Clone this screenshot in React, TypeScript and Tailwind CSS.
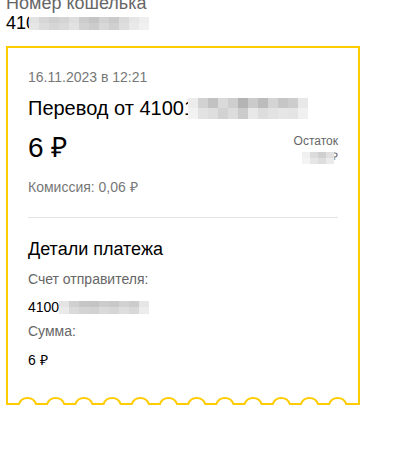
import React from "react";

const font = { fontFamily: '"Liberation Sans", Arial, sans-serif' };

function Blur({ top, bottom, cell, h }: { top: string[]; bottom: string[]; cell: number; h: number }) {
  return (
    <span className="inline-flex flex-col align-middle">
      <span className="flex">
        {top.map((c, i) => (
          <span key={i} style={{ background: c, width: cell, height: h / 2 }} />
        ))}
      </span>
      <span className="flex">
        {bottom.map((c, i) => (
          <span key={i} style={{ background: c, width: cell, height: h / 2 }} />
        ))}
      </span>
    </span>
  );
}

function Scallop() {
  const parts: string[] = ["M0 9"];
  for (let i = 0; i < 12; i++) {
    const cx = 19.5 + 28.2 * i;
    parts.push(`L${(cx - 8.5).toFixed(2)} 9 A9 9 0 0 1 ${(cx + 8.5).toFixed(2)} 9`);
  }
  parts.push("L350 9");
  return (
    <svg width="350" height="10" viewBox="0 0 350 10" className="block">
      <path d={parts.join(" ")} fill="none" stroke="#ffcc00" strokeWidth="2" />
    </svg>
  );
}

export default function App() {
  return (
    <div className="bg-white w-[409px] h-[461px] overflow-hidden" style={font}>
      <div className="pl-[6px] -mt-[7px]">
        <div className="text-[18px] leading-[20px] text-[#666]">Номер кошелька</div>
        <div className="flex items-center text-[18px] leading-[20px] text-black">
          <span>41</span>
          <span className="inline-block w-[3px] overflow-hidden">0</span>
          <Blur
            cell={10}
            h={13}
            top={["#e2e2e2", "#d6d6d6", "#cfcfcf", "#d4d4d4", "#dedede", "#cccccc", "#c4c4c4", "#d2d2d2", "#cacaca", "#dadada", "#e6e6e6", "#eeeeee"]}
            bottom={["#e6e6e6", "#dcdcdc", "#d6d6d6", "#dadada", "#e2e2e2", "#d2d2d2", "#cccccc", "#d8d8d8", "#d0d0d0", "#dedede", "#e9e9e9", "#f0f0f0"]}
          />
        </div>

        <div className="mt-[13px] w-[354px] border-2 border-b-0 border-[#ffcc00]">
          <div className="px-5 pt-[19px] pb-[25px]">
            <div className="text-[14px] leading-[20px] text-[#777]">16.11.2023 в 12:21</div>
            <div className="mt-[9px] flex items-center text-[20px] leading-[24px] text-black">
              <span>Перевод от 4100</span>
              <span className="inline-block w-[4px] overflow-hidden">1</span>
              <Blur
                cell={10}
                h={21}
                top={["#ececec", "#d2d2d2", "#c2c2c2", "#dadada", "#cecece", "#b4b4b4", "#cbcbcb", "#bcbcbc", "#d4d4d4", "#c6c6c6", "#cdcdcd", "#e8e8e8"]}
                bottom={["#f2f2f2", "#e2e2e2", "#dedede", "#d2d2d2", "#dcdcdc", "#cbcbcb", "#e8e8e8", "#dddddd", "#e2e2e2", "#e6e6e6", "#e4e4e4", "#f0f0f0"]}
              />
            </div>
            <div className="mt-[12px] flex items-start justify-between">
              <div className="text-[28px] leading-[32px] text-black">6 ₽</div>
              <div className="mt-[1px] flex flex-col items-end text-[12px] leading-[16px] text-[#666]">
                <span>Остаток</span>
                <span className="flex items-center">
                  <span className="relative z-10">
                    <Blur
                      cell={8}
                      h={12}
                      top={["#f0f0f0", "#dcdcdc", "#d0d0d0", "#e0e0e0"]}
                      bottom={["#f4f4f4", "#e6e6e6", "#dedede", "#eaeaea"]}
                    />
                  </span>
                  <span className="-ml-[3px]">₽</span>
                </span>
              </div>
            </div>
            <div className="mt-[12px] text-[14px] leading-[20px] text-[#777]">Комиссия: 0,06 ₽</div>
            <div className="mt-[20px] h-px bg-[#e3e3e3]" />
            <div className="mt-[19px] text-[18px] leading-[24px] text-black">Детали платежа</div>
            <div className="mt-[8px] text-[14px] leading-[20px] text-[#666]">Счет отправителя:</div>
            <div className="mt-[8px] flex items-center text-[14px] leading-[20px] text-black">
              <span>4100</span>
              <Blur
                cell={10}
                h={13}
                top={["#e4e4e4", "#d0d0d0", "#c6c6c6", "#c4c4c4", "#cccccc", "#c8c8c8", "#d2d2d2", "#cccccc", "#e6e6e6"]}
                bottom={["#eaeaea", "#dadada", "#d4d4d4", "#d2d2d2", "#dadada", "#d6d6d6", "#dedede", "#d8d8d8", "#ececec"]}
              />
            </div>
            <div className="mt-[4px] text-[14px] leading-[20px] text-[#666]">Сумма:</div>
            <div className="mt-[9px] text-[14px] leading-[20px] text-black">6 ₽</div>
          </div>
          <Scallop />
        </div>
      </div>
    </div>
  );
}
